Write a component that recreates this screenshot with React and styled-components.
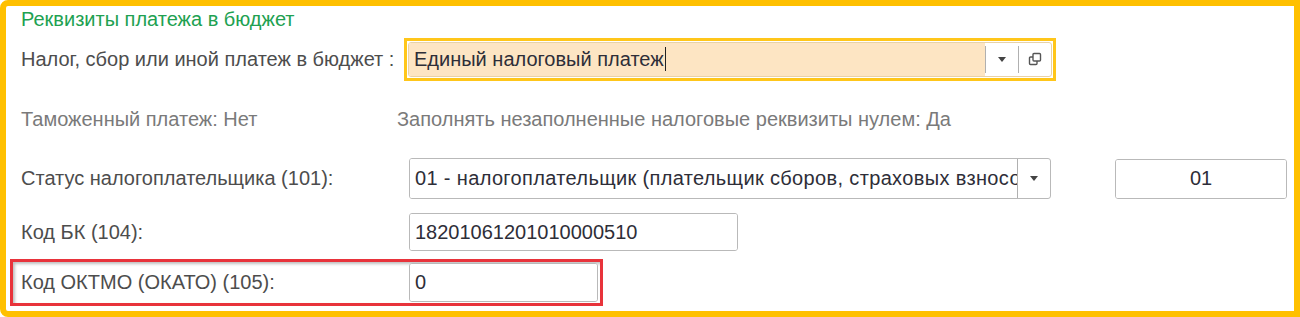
import React from "react";
import styled, { createGlobalStyle } from "styled-components";

const Global = createGlobalStyle`
  html, body { margin: 0; padding: 0; background: #fff; }
  body { font-family: "Liberation Sans", Arial, sans-serif; }
  * { box-sizing: border-box; }
`;

const Frame = styled.div`
  width: 1300px;
  height: 317px;
  border: 6px solid #ffc000;
  border-radius: 8px 0 0 8px;
  padding: 2px 0 0 2px;
  display: flex;
  flex-direction: column;
  overflow: hidden;
  font-size: 20px;
  color: #4d4d4d;
`;

const Title = styled.div`
  color: #21a151;
  line-height: 22px;
  height: 22px;
  padding-left: 13px;
`;

const Row = styled.div`
  display: flex;
  align-items: center;
  height: ${(p) => p.$h}px;
  margin-top: ${(p) => p.$mt || 0}px;
  padding-left: 13px;
`;

const Label = styled.div`
  width: ${(p) => p.$w || 388}px;
  flex: none;
  white-space: nowrap;
  color: ${(p) => (p.$muted ? "#7a7a7a" : "#4d4d4d")};
`;

const Focus = styled.div`
  margin-left: -5px;
  width: 652px;
  height: 43px;
  border: 3px solid #ffc61a;
  padding: 1px;
  display: flex;
`;

const Field = styled.div`
  display: flex;
  align-items: stretch;
  width: ${(p) => p.$w}px;
  height: ${(p) => p.$h}px;
  margin-left: ${(p) => p.$ml || 0}px;
  border: 1px solid ${(p) => (p.$focus ? "#e8d2a8" : "#b9b9b9")};
  border-radius: 3px;
  background: #fff;
  flex: ${(p) => (p.$grow ? "1" : "none")};
  overflow: hidden;
`;

const Value = styled.div`
  flex: 1;
  display: flex;
  align-items: center;
  justify-content: ${(p) => (p.$center ? "center" : "flex-start")};
  padding-left: ${(p) => (p.$center ? 0 : 5)}px;
  letter-spacing: ${(p) => p.$ls || 0}px;
  background: ${(p) => (p.$focus ? "#fde5c3" : "#fff")};
  color: #2e2e38;
  white-space: nowrap;
  overflow: hidden;
`;

const Caret = styled.span`
  display: inline-block;
  width: 1.5px;
  height: 24px;
  background: #222;
  margin-left: 1px;
`;

const Btn = styled.div`
  width: ${(p) => p.$w || 33}px;
  flex: none;
  display: flex;
  align-items: center;
  justify-content: center;
  border-left: 1px solid ${(p) => (p.$line ? "#b0b0b0" : "transparent")};
  margin: ${(p) => (p.$inset ? "3px 0" : "0")};
`;

const Arrow = styled.span`
  width: 0;
  height: 0;
  border-left: 4px solid transparent;
  border-right: 4px solid transparent;
  border-top: 5px solid #444;
`;

const Muted = styled.div`
  color: #7a7a7a;
  white-space: nowrap;
`;

const Highlight = styled.div`
  margin-top: 8px;
  margin-left: 2px;
  width: 593px;
  height: 47px;
  border: 3px solid #e8333b;
  box-shadow: inset 2px 2px 3px rgba(0, 0, 0, 0.25);
  display: flex;
  align-items: center;
  padding-left: 8px;
`;

const CopyIcon = () => (
  <svg width="14" height="14" viewBox="0 0 14 14" fill="none" stroke="#555" strokeWidth="1.4">
    <rect x="5" y="1.5" width="7.5" height="7.5" rx="1" />
    <path d="M5 5 H2.5 a1 1 0 0 0 -1 1 V11.5 a1 1 0 0 0 1 1 H8 a1 1 0 0 0 1 -1 V9" />
  </svg>
);

export default function App() {
  return (
    <>
      <Global />
      <Frame>
        <Title>Реквизиты платежа в бюджет</Title>
        <Row $h={44} $mt={7}>
          <Label>Налог, сбор или иной платеж в бюджет :</Label>
          <Focus>
            <Field $grow $h={35} $focus>
              <Value $focus>
                Единый налоговый платеж
                <Caret />
              </Value>
              <Btn $w={33} $line $inset>
                <Arrow />
              </Btn>
              <Btn $w={33} $line $inset>
                <CopyIcon />
              </Btn>
            </Field>
          </Focus>
        </Row>
        <Row $h={40} $mt={18}>
          <Label $w={376} $muted>Таможенный платеж: Нет</Label>
          <Muted>Заполнять незаполненные налоговые реквизиты нулем: Да</Muted>
        </Row>
        <Row $h={41} $mt={19}>
          <Label>Статус налогоплательщика (101):</Label>
          <Field $w={642} $h={41}>
            <Value $ls={0.35}>01 - налогоплательщик (плательщик сборов, страховых взносов)</Value>
            <Btn $w={33} $line>
              <Arrow />
            </Btn>
          </Field>
          <Field $w={172} $h={40} $ml={64}>
            <Value $center>01</Value>
          </Field>
        </Row>
        <Row $h={38} $mt={14}>
          <Label>Код БК (104):</Label>
          <Field $w={329} $h={38}>
            <Value>18201061201010000510</Value>
          </Field>
        </Row>
        <Highlight>
          <Label $w={388}>Код ОКТМО (ОКАТО) (105):</Label>
          <Field $w={189} $h={39}>
            <Value>0</Value>
          </Field>
        </Highlight>
      </Frame>
    </>
  );
}
